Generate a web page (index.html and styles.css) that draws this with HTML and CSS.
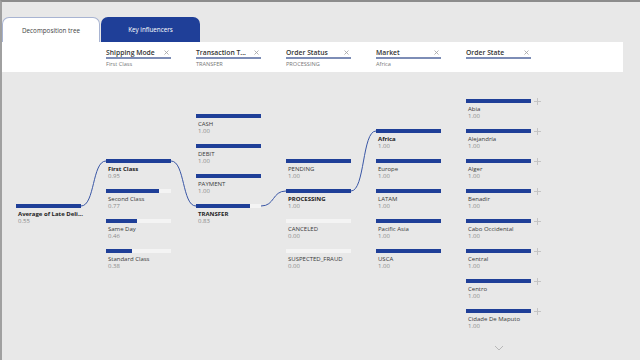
FILE: index.html
```html
<!DOCTYPE html>
<html>
<head>
<meta charset="utf-8">
<link rel="stylesheet" href="styles.css">
</head>
<body>
<div class="frame">
  <div class="tabs">
    <div class="tab tab-light">Decomposition tree</div>
    <div class="tab tab-dark">Key influencers</div>
  </div>
  <div class="filters">
    <div class="filter"><div class="fhead"><span>Shipping Mode</span><svg class="x" width="5" height="5" viewBox="0 0 5 5"><path d="M0.5,0.5 L4.5,4.5 M4.5,0.5 L0.5,4.5"/></svg></div><div class="fsub">First Class</div></div>
    <div class="filter"><div class="fhead"><span>Transaction T...</span><svg class="x" width="5" height="5" viewBox="0 0 5 5"><path d="M0.5,0.5 L4.5,4.5 M4.5,0.5 L0.5,4.5"/></svg></div><div class="fsub">TRANSFER</div></div>
    <div class="filter"><div class="fhead"><span>Order Status</span><svg class="x" width="5" height="5" viewBox="0 0 5 5"><path d="M0.5,0.5 L4.5,4.5 M4.5,0.5 L0.5,4.5"/></svg></div><div class="fsub">PROCESSING</div></div>
    <div class="filter"><div class="fhead"><span>Market</span><svg class="x" width="5" height="5" viewBox="0 0 5 5"><path d="M0.5,0.5 L4.5,4.5 M4.5,0.5 L0.5,4.5"/></svg></div><div class="fsub">Africa</div></div>
    <div class="filter"><div class="fhead"><span>Order State</span><svg class="x" width="5" height="5" viewBox="0 0 5 5"><path d="M0.5,0.5 L4.5,4.5 M4.5,0.5 L0.5,4.5"/></svg></div><div class="fsub"></div></div>
  </div>
  <div class="tree">
    <svg class="links" width="638" height="288" viewBox="0 0 638 288">
      <path d="M79,134 C93,134 90,89 104,89" />
      <path d="M169,89 C183,89 180,134 194,134" />
      <path d="M259,134 C273,134 270,119 284,119" />
      <path d="M349,119 C363,119 360,59 374,59" />
    </svg>
    <div class="col col-root">
      <div class="node sel"><div class="track"><div class="fill" style="width:100%"></div></div><div class="lbl">Average of Late Deli...</div><div class="val">0.55</div></div>
    </div>
    <div class="col col-1">
      <div class="node sel"><div class="track"><div class="fill" style="width:100%"></div></div><div class="lbl">First Class</div><div class="val">0.95</div></div>
      <div class="node"><div class="track"><div class="fill" style="width:81%"></div></div><div class="lbl">Second Class</div><div class="val">0.77</div></div>
      <div class="node"><div class="track"><div class="fill" style="width:48%"></div></div><div class="lbl">Same Day</div><div class="val">0.46</div></div>
      <div class="node"><div class="track"><div class="fill" style="width:40%"></div></div><div class="lbl">Standard Class</div><div class="val">0.38</div></div>
    </div>
    <div class="col col-2">
      <div class="node"><div class="track"><div class="fill" style="width:100%"></div></div><div class="lbl">CASH</div><div class="val">1.00</div></div>
      <div class="node"><div class="track"><div class="fill" style="width:100%"></div></div><div class="lbl">DEBIT</div><div class="val">1.00</div></div>
      <div class="node"><div class="track"><div class="fill" style="width:100%"></div></div><div class="lbl">PAYMENT</div><div class="val">1.00</div></div>
      <div class="node sel"><div class="track"><div class="fill" style="width:83%"></div></div><div class="lbl">TRANSFER</div><div class="val">0.83</div></div>
    </div>
    <div class="col col-3">
      <div class="node"><div class="track"><div class="fill" style="width:100%"></div></div><div class="lbl">PENDING</div><div class="val">1.00</div></div>
      <div class="node sel"><div class="track"><div class="fill" style="width:100%"></div></div><div class="lbl">PROCESSING</div><div class="val">1.00</div></div>
      <div class="node"><div class="track"><div class="fill" style="width:0%"></div></div><div class="lbl">CANCELED</div><div class="val">0.00</div></div>
      <div class="node"><div class="track"><div class="fill" style="width:0%"></div></div><div class="lbl">SUSPECTED_FRAUD</div><div class="val">0.00</div></div>
    </div>
    <div class="col col-4">
      <div class="node sel"><div class="track"><div class="fill" style="width:100%"></div></div><div class="lbl">Africa</div><div class="val">1.00</div></div>
      <div class="node"><div class="track"><div class="fill" style="width:100%"></div></div><div class="lbl">Europe</div><div class="val">1.00</div></div>
      <div class="node"><div class="track"><div class="fill" style="width:100%"></div></div><div class="lbl">LATAM</div><div class="val">1.00</div></div>
      <div class="node"><div class="track"><div class="fill" style="width:100%"></div></div><div class="lbl">Pacific Asia</div><div class="val">1.00</div></div>
      <div class="node"><div class="track"><div class="fill" style="width:100%"></div></div><div class="lbl">USCA</div><div class="val">1.00</div></div>
    </div>
    <div class="col col-5">
      <div class="node leaf"><div class="track"><div class="fill" style="width:100%"></div></div><svg class="plus" width="7" height="7" viewBox="0 0 7 7"><path d="M3.5,0 V7 M0,3.5 H7"/></svg><div class="lbl">Abia</div><div class="val">1.00</div></div>
      <div class="node leaf"><div class="track"><div class="fill" style="width:100%"></div></div><svg class="plus" width="7" height="7" viewBox="0 0 7 7"><path d="M3.5,0 V7 M0,3.5 H7"/></svg><div class="lbl">Alejandría</div><div class="val">1.00</div></div>
      <div class="node leaf"><div class="track"><div class="fill" style="width:100%"></div></div><svg class="plus" width="7" height="7" viewBox="0 0 7 7"><path d="M3.5,0 V7 M0,3.5 H7"/></svg><div class="lbl">Alger</div><div class="val">1.00</div></div>
      <div class="node leaf"><div class="track"><div class="fill" style="width:100%"></div></div><svg class="plus" width="7" height="7" viewBox="0 0 7 7"><path d="M3.5,0 V7 M0,3.5 H7"/></svg><div class="lbl">Benadir</div><div class="val">1.00</div></div>
      <div class="node leaf"><div class="track"><div class="fill" style="width:100%"></div></div><svg class="plus" width="7" height="7" viewBox="0 0 7 7"><path d="M3.5,0 V7 M0,3.5 H7"/></svg><div class="lbl">Cabo Occidental</div><div class="val">1.00</div></div>
      <div class="node leaf"><div class="track"><div class="fill" style="width:100%"></div></div><svg class="plus" width="7" height="7" viewBox="0 0 7 7"><path d="M3.5,0 V7 M0,3.5 H7"/></svg><div class="lbl">Central</div><div class="val">1.00</div></div>
      <div class="node leaf"><div class="track"><div class="fill" style="width:100%"></div></div><svg class="plus" width="7" height="7" viewBox="0 0 7 7"><path d="M3.5,0 V7 M0,3.5 H7"/></svg><div class="lbl">Centro</div><div class="val">1.00</div></div>
      <div class="node leaf"><div class="track"><div class="fill" style="width:100%"></div></div><svg class="plus" width="7" height="7" viewBox="0 0 7 7"><path d="M3.5,0 V7 M0,3.5 H7"/></svg><div class="lbl">Cidade De Maputo</div><div class="val">1.00</div></div>
      <div class="more"><svg width="10" height="6" viewBox="0 0 10 6"><path d="M1,1 L5,5 L9,1" /></svg></div>
    </div>
  </div>
</div>
</body>
</html>
```
FILE: styles.css
```css
* { box-sizing: border-box; }
html, body { margin: 0; padding: 0; }
body {
  width: 640px;
  height: 360px;
  overflow: hidden;
  background: #e8e8e8;
  font-family: "Open Sans", "Noto Sans", sans-serif;
  color: #333;
}
.frame {
  width: 640px;
  height: 360px;
  border-top: 2px solid #8c8c8c;
  border-left: 2px solid #a0a0a0;
  background: #e8e8e8;
  display: flex;
  flex-direction: column;
}
.tabs {
  display: flex;
  margin-top: 15px;
  height: 25px;
  gap: 1px;
}
.tab {
  display: flex;
  align-items: center;
  justify-content: center;
  font-size: 6.3px;
  border-radius: 7px 7px 0 0;
}
.tab-light {
  width: 98px;
  background: #fff;
  border: 1px solid #a8b4d2;
  border-bottom: none;
  color: #444;
}
.tab-dark {
  width: 99px;
  background: #1f3f98;
  color: #fff;
}
.filters {
  width: 621px;
  height: 30px;
  background: #fff;
  display: flex;
  gap: 25px;
  padding-left: 104px;
  padding-top: 6px;
}
.filter { width: 65px; }
.fhead {
  display: flex;
  justify-content: space-between;
  align-items: center;
  font-size: 6.8px;
  font-weight: 600;
  color: #333;
  height: 11px;
  border-bottom: 2px solid #7d8db6;
  padding-right: 2px;
}
.fhead .x { display: block; }
.fhead .x path { stroke: #a0a0a0; stroke-width: 0.8; fill: none; }
.fsub {
  font-size: 5.6px;
  color: #777;
  margin-top: 1px;
  line-height: 8px;
}
.tree {
  position: relative;
  flex: 1;
  display: flex;
  gap: 25px;
  padding-left: 14px;
}
.links {
  position: absolute;
  left: 0;
  top: 0;
}
.links path {
  fill: none;
  stroke: #3a57a6;
  stroke-width: 1;
}
.col {
  width: 65px;
  display: flex;
  flex-direction: column;
  position: relative;
}
.col-root { padding-top: 132px; }
.col-1 { padding-top: 87px; }
.col-2 { padding-top: 42px; }
.col-3 { padding-top: 87px; }
.col-4 { padding-top: 57px; }
.col-5 { padding-top: 27px; }
.node {
  height: 30px;
  position: relative;
}
.track {
  height: 4px;
  width: 65px;
  background: #f4f4f4;
}
.fill {
  height: 100%;
  background: #1f3f98;
}
.lbl {
  font-size: 6px;
  line-height: 7px;
  margin-top: 3px;
  padding-left: 2px;
  color: #3a3a3a;
  white-space: nowrap;
}
.sel .lbl { font-weight: 700; color: #222; }
.val {
  font-size: 6px;
  line-height: 7px;
  padding-left: 2px;
  color: #888;
}
.plus {
  position: absolute;
  left: 68px;
  top: -1px;
}
.plus path {
  stroke: #c4c4c4;
  stroke-width: 1;
  fill: none;
}
.more {
  display: flex;
  justify-content: center;
  padding-top: 6px;
}
.more path {
  fill: none;
  stroke: #b8b8b8;
  stroke-width: 1;
}
```
